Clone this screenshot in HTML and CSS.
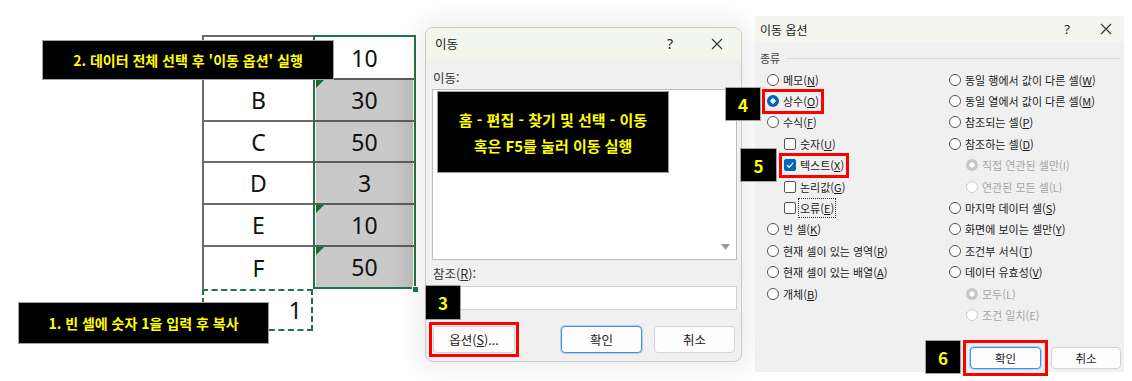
FILE: index.html
```html
<!DOCTYPE html>
<html lang="ko">
<head>
<meta charset="utf-8">
<title>이동 옵션</title>
<link rel="stylesheet" href="styles.css">
</head>
<body>
<div class="stage">

    <!-- worksheet part -->
    <div class="sheet">
        <div class="grid">
            <div class="ca first"></div><div class="cb active">10</div>
            <div class="ca">B</div><div class="cb tri">30</div>
            <div class="ca">C</div><div class="cb">50</div>
            <div class="ca">D</div><div class="cb">3</div>
            <div class="ca">E</div><div class="cb tri">10</div>
            <div class="ca last">F</div><div class="cb tri end">50</div>
            <div class="ants">1</div><div></div>
        </div>
        <span class="handle"></span>
    </div>

    <!-- 이동 dialog -->
    <div class="dlg go">
        <div class="bar">
            <span class="ttl">이동</span>
            <span class="help">?</span>
            <svg class="close" width="12" height="12" viewBox="0 0 12 12"><path d="M1 1L11 11M11 1L1 11" stroke="#333" stroke-width="1.1" fill="none"/></svg>
        </div>
        <div class="go-body">
            <div class="lbl">이동:</div>
            <div class="listbox">
                <div class="tip">
                    <span>홈 - 편집 - 찾기 및 선택 - 이동</span>
                    <span>혹은 F5를 눌러 이동 실행</span>
                </div>
                <svg class="arrow" width="9" height="6" viewBox="0 0 9 6"><path d="M0 0H9L4.5 6Z" fill="#9a9a9a"/></svg>
            </div>
            <div class="lbl ref">참조(<u>R</u>):</div>
            <div class="field"></div>
            <div class="go-btns">
                <span class="mark opt"><button class="btn">옵션(<u>S</u>)...</button></span>
                <button class="btn main">확인</button>
                <button class="btn">취소</button>
            </div>
        </div>
    </div>

    <!-- 이동 옵션 dialog -->
    <div class="dlg special">
        <div class="bar">
            <span class="ttl">이동 옵션</span>
            <span class="help">?</span>
            <svg class="close" width="12" height="12" viewBox="0 0 12 12"><path d="M1 1L11 11M11 1L1 11" stroke="#333" stroke-width="1.1" fill="none"/></svg>
        </div>
        <div class="group"><span>종류</span><i></i></div>
        <div class="opts">
            <div class="col">
                <div class="row"><span class="item"><b class="rd"></b>메모(<u>N</u>)</span></div>
                <div class="row"><span class="item mark"><b class="rd on"></b>상수(<u>O</u>)</span></div>
                <div class="row"><span class="item"><b class="rd"></b>수식(<u>F</u>)</span></div>
                <div class="row sub"><span class="item"><b class="ck"></b>숫자(<u>U</u>)</span></div>
                <div class="row sub"><span class="item mark"><b class="ck on"><svg width="10" height="10" viewBox="0 0 10 10"><path d="M2 5.2L4.2 7.3L8 2.8" stroke="#fff" stroke-width="1.2" fill="none"/></svg></b>텍스트(<u>X</u>)</span></div>
                <div class="row sub"><span class="item"><b class="ck"></b>논리값(<u>G</u>)</span></div>
                <div class="row sub"><span class="item"><b class="ck"></b><span class="focus">오류(<u>E</u>)</span></span></div>
                <div class="row"><span class="item"><b class="rd"></b>빈 셀(<u>K</u>)</span></div>
                <div class="row"><span class="item"><b class="rd"></b>현재 셀이 있는 영역(<u>R</u>)</span></div>
                <div class="row"><span class="item"><b class="rd"></b>현재 셀이 있는 배열(<u>A</u>)</span></div>
                <div class="row"><span class="item"><b class="rd"></b>개체(<u>B</u>)</span></div>
            </div>
            <div class="col">
                <div class="row"><span class="item"><b class="rd"></b>동일 행에서 값이 다른 셀(<u>W</u>)</span></div>
                <div class="row"><span class="item"><b class="rd"></b>동일 열에서 값이 다른 셀(<u>M</u>)</span></div>
                <div class="row"><span class="item"><b class="rd"></b>참조되는 셀(<u>P</u>)</span></div>
                <div class="row"><span class="item"><b class="rd"></b>참조하는 셀(<u>D</u>)</span></div>
                <div class="row sub dim"><span class="item"><b class="rd on"></b>직접 연관된 셀만(I)</span></div>
                <div class="row sub dim"><span class="item"><b class="rd"></b>연관된 모든 셀(L)</span></div>
                <div class="row"><span class="item"><b class="rd"></b>마지막 데이터 셀(<u>S</u>)</span></div>
                <div class="row"><span class="item"><b class="rd"></b>화면에 보이는 셀만(<u>Y</u>)</span></div>
                <div class="row"><span class="item"><b class="rd"></b>조건부 서식(<u>T</u>)</span></div>
                <div class="row"><span class="item"><b class="rd"></b>데이터 유효성(<u>V</u>)</span></div>
                <div class="row sub dim"><span class="item"><b class="rd on"></b>모두(L)</span></div>
                <div class="row sub dim"><span class="item"><b class="rd"></b>조건 일치(E)</span></div>
            </div>
        </div>
        <div class="sp-btns">
            <span class="mark ok"><button class="btn main">확인</button></span>
            <button class="btn">취소</button>
        </div>
    </div>

    <!-- step notes -->
    <div class="note n2">2. 데이터 전체 선택 후 '이동 옵션' 실행</div>
    <div class="note n1">1. 빈 셀에 숫자 1을 입력 후 복사</div>
    <div class="note num s3">3</div>
    <div class="note num s4">4</div>
    <div class="note num s5">5</div>
    <div class="note num s6">6</div>

</div>
</body>
</html>
```

FILE: styles.css
```css
* {
    box-sizing: border-box;
}

body {
    margin: 0;
    background: #fff;
    font-family: "Noto Sans CJK KR", "Noto Sans", sans-serif;
    color: #1b1b1b;
}

.stage {
    position: relative;
    width: 1132px;
    height: 381px;
    display: flex;
    align-items: flex-start;
    overflow: hidden;
}

/* ---------- worksheet ---------- */

.sheet {
    position: relative;
    flex: none;
    width: 420px;
    padding: 35px 0 0 202px;
}

.grid {
    display: grid;
    grid-template-columns: 111px 103px;
    grid-template-rows: 45px 42px 41px 42px 42px 42px 42px;
    font-family: "Noto Sans", sans-serif;
    font-size: 23px;
    color: #111;
}

.ca, .cb, .ants {
    display: flex;
    align-items: center;
    justify-content: center;
}

.ca {
    border-left: 2px solid #6b6b6b;
    border-bottom: 2px solid #6b6b6b;
}
.ca.first {
    border-top: 2px solid #6b6b6b;
}
.ca.last {
    border-bottom: none;
}

.cb {
    position: relative;
    background: linear-gradient(to right, #c9c9c9 75%, #bdbdbd);
    border-left: 2px solid #217346;
    border-right: 2px solid #217346;
    border-bottom: 2px solid #5c5c5c;
    box-shadow: inset 1px 0 #fff, inset -1px 0 #fff;
}
.cb.active {
    background: #fff;
    border-top: 2px solid #217346;
}
.cb.end {
    border-bottom: 2px solid #217346;
}
.cb.tri::before {
    content: "";
    position: absolute;
    left: 1px;
    top: 0;
    border-top: 8px solid #1b6b2c;
    border-right: 8px solid transparent;
}

.ants {
    justify-content: flex-end;
    padding-right: 9px;
    border: 2px dashed #217346;
}

.handle {
    position: absolute;
    left: 412px;
    top: 286px;
    width: 7px;
    height: 7px;
    background: #217346;
    border: 1px solid #fff;
}

/* ---------- dialogs ---------- */

.dlg {
    position: relative;
    flex: none;
    background: #f0f0f0;
    display: flex;
    flex-direction: column;
}

.bar {
    display: flex;
    align-items: center;
}
.bar .ttl {
    flex: 1;
}
.help {
    width: 16px;
    text-align: center;
    font-family: "Noto Sans", sans-serif;
}

.go {
    margin: 27px 0 0 5px;
    width: 317px;
    height: 335px;
    border: 1px solid #cbcbcb;
    border-radius: 8px;
    box-shadow: 0 0 26px 8px rgba(0, 0, 0, 0.07);
    overflow: hidden;
    font-size: 12.5px;
}
.go .bar {
    height: 31px;
    background: #f3f6ed;
    padding: 0 18px 0 9px;
    font-size: 12.5px;
}
.go .help {
    margin-right: 33px;
    font-size: 14px;
}

.go-body {
    display: flex;
    flex-direction: column;
    padding: 0 4px 0 6px;
}

.lbl {
    height: 16px;
    line-height: 16px;
    margin-top: 11px;
    padding-left: 1px;
    color: #333;
}
.lbl.ref {
    margin-top: 6px;
}

.listbox {
    position: relative;
    height: 171px;
    margin-top: 3px;
    background: #fff;
    border: 1px solid #bdbdbd;
    padding: 1px 0 0 4px;
}
.listbox .arrow {
    position: absolute;
    right: 6px;
    bottom: 9px;
}

.tip {
    width: 232px;
    height: 82px;
    background: #000;
    border: 1px solid #9c9c9c;
    color: #ffff00;
    font-weight: 700;
    font-size: 15px;
    display: flex;
    flex-direction: column;
    align-items: center;
    justify-content: center;
    gap: 5px;
}

.field {
    height: 24px;
    margin-top: 4px;
    background: #fff;
    border: 1px solid #cfcfcf;
}

.go-btns {
    display: flex;
    margin-top: 16px;
    padding-left: 1px;
}

.btn {
    display: block;
    height: 27px;
    width: 81px;
    font-family: inherit;
    font-size: 12.5px;
    color: #1b1b1b;
    background: #fdfdfd;
    border: 1px solid #d3d3d3;
    border-radius: 4px;
    padding: 0;
}
.btn.main {
    border: 1px solid #4a8fd8;
    box-shadow: 0 0 0 1px #b0d0f1;
}
.opt {
    margin-right: 46px;
}
.opt .btn {
    width: 82px;
}
.go-btns .btn.main {
    margin-right: 12px;
}

.mark {
    outline: 3px solid #ff0000;
    outline-offset: 2px;
}
.mark.opt {
    display: block;
    outline-offset: 1px;
}

/* 이동 옵션 */

.special {
    margin: 16px 0 0 13px;
    width: 369px;
    height: 356px;
    font-size: 11px;
}
.special .bar {
    height: 26px;
    background: #f4f5ef;
    padding: 0 12px 0 5px;
    font-size: 12px;
}
.special .help {
    margin-right: 25px;
    font-size: 13px;
}

.group {
    display: flex;
    align-items: center;
    height: 16px;
    margin-top: 8px;
    padding: 0 4px 0 5px;
    color: #444;
}
.group i {
    flex: 1;
    height: 1px;
    margin-left: 6px;
    background: #dadada;
}

.opts {
    display: flex;
    margin-top: 3px;
    padding-left: 12px;
}
.col:first-child {
    width: 182px;
}

.row {
    height: 21.4px;
    display: flex;
    align-items: center;
}
.row.sub {
    padding-left: 17px;
}
.row.dim {
    color: #a5a5a5;
}

.item {
    display: inline-flex;
    align-items: center;
    height: 15px;
    white-space: nowrap;
}

.rd {
    flex: none;
    width: 12px;
    height: 12px;
    margin-right: 4px;
    border: 1px solid #555;
    border-radius: 50%;
    background: #fff;
}
.rd.on {
    border: none;
    background: radial-gradient(circle, #fff 0 2.3px, #0067c0 2.9px);
}
.dim .rd {
    border-color: #cacaca;
}
.dim .rd.on {
    border: none;
    background: radial-gradient(circle, #fff 0 2.3px, #c6c6c6 2.9px);
}

.ck {
    flex: none;
    width: 12px;
    height: 12px;
    margin-right: 4px;
    border: 1px solid #555;
    border-radius: 2px;
    background: #fff;
    display: flex;
    align-items: center;
    justify-content: center;
}
.ck.on {
    background: #0067c0;
    border-color: #0067c0;
}

.focus {
    outline: 1px dotted #333;
    outline-offset: 1px;
}

.sp-btns {
    display: flex;
    justify-content: flex-end;
    gap: 10px;
    margin-top: auto;
    padding: 0 3px 3px 0;
}
.sp-btns .btn {
    height: 22px;
    width: 70px;
    font-size: 11.5px;
}
.sp-btns .btn.main {
    width: 71px;
}
.mark.ok {
    display: block;
    outline-offset: 4px;
}

/* ---------- step notes ---------- */

.note {
    position: absolute;
    background: #000;
    border: 1px solid #a3a3a3;
    color: #ffff00;
    font-weight: 700;
    font-size: 14px;
    display: flex;
    align-items: center;
    justify-content: center;
    white-space: nowrap;
}
.n2 { left: 42px; top: 40px; width: 292px; height: 40px; }
.n1 { left: 18px; top: 302px; width: 251px; height: 42px; }

.num {
    font-size: 17px;
    width: 36px;
    height: 35px;
}
.s3 { left: 425px; top: 285px; }
.s4 { left: 725px; top: 87px; height: 34px; }
.s5 { left: 740px; top: 148px; width: 37px; height: 34px; }
.s6 { left: 925px; top: 340px; height: 34px; }
```
